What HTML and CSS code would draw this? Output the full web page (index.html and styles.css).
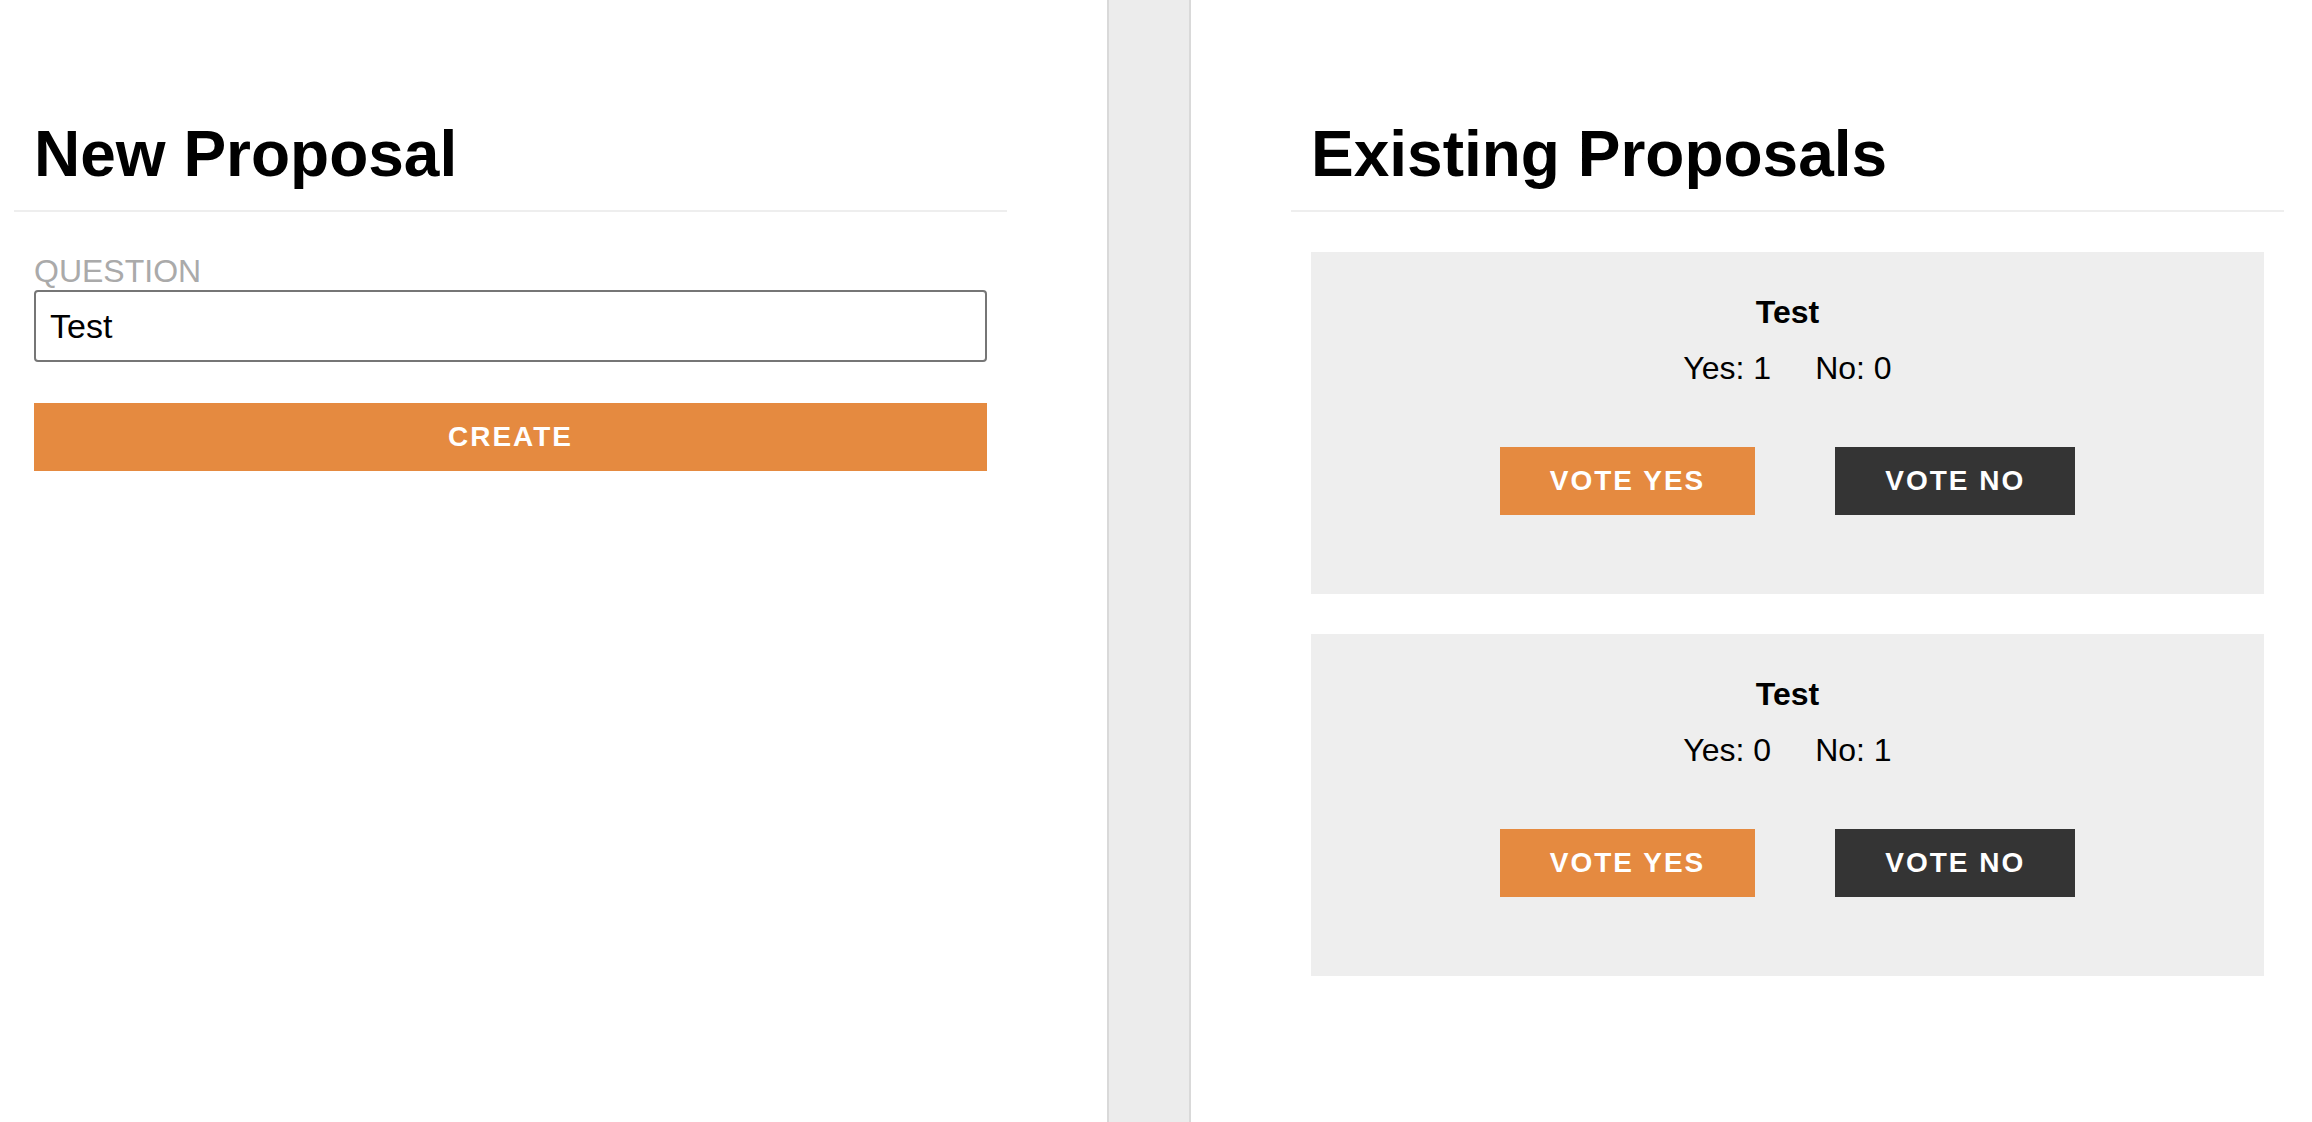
FILE: index.html
```html
<!DOCTYPE html>
<html lang="en">
<head>
<meta charset="utf-8">
<title>Proposals</title>
<link rel="stylesheet" href="styles.css">
</head>
<body>
<div class="app">
  <section class="pane pane-left">
    <h1 class="pane-title">New Proposal</h1>
    <div class="form">
      <label class="field-label" for="question">QUESTION</label>
      <input class="field-input" id="question" type="text" value="Test">
      <button class="btn btn-orange btn-block">CREATE</button>
    </div>
  </section>
  <div class="divider"></div>
  <section class="pane pane-right">
    <h1 class="pane-title">Existing Proposals</h1>
    <div class="proposals">
      <article class="card">
        <h3 class="card-title">Test</h3>
        <div class="counts"><span>Yes: 1</span><span>No: 0</span></div>
        <div class="actions">
          <button class="btn btn-orange">VOTE YES</button>
          <button class="btn btn-dark">VOTE NO</button>
        </div>
      </article>
      <article class="card">
        <h3 class="card-title">Test</h3>
        <div class="counts"><span>Yes: 0</span><span>No: 1</span></div>
        <div class="actions">
          <button class="btn btn-orange">VOTE YES</button>
          <button class="btn btn-dark">VOTE NO</button>
        </div>
      </article>
    </div>
  </section>
</div>
</body>
</html>
```
FILE: styles.css
```css
html, body {
  margin: 0;
  padding: 0;
  background: #fff;
  font-family: "Liberation Sans", Arial, Helvetica, sans-serif;
  color: #000;
}

.app {
  display: flex;
  min-height: 1122px;
}

.pane {
  box-sizing: border-box;
  padding-top: 117px;
}

.pane-left {
  width: 1107px;
  flex: none;
  padding-left: 14px;
  padding-right: 100px;
}

.pane-right {
  flex: 1;
  padding-left: 100px;
  padding-right: 28px;
}

.divider {
  flex: none;
  width: 84px;
  box-sizing: border-box;
  background: #ececec;
  border-left: 2px solid #d9d9d9;
  border-right: 2px solid #d9d9d9;
}

.pane-title {
  margin: 0;
  padding: 0 20px 19px;
  font-size: 64px;
  line-height: 74px;
  font-weight: bold;
  border-bottom: 2px solid #eeeeee;
}

.form {
  padding: 41px 20px 0;
}

.field-label {
  display: block;
  font-size: 32px;
  line-height: 36px;
  color: #aaaaaa;
}

.field-input {
  display: block;
  box-sizing: border-box;
  width: 100%;
  height: 72px;
  margin: 1px 0 0;
  padding: 0 14px;
  border: 2px solid #767676;
  border-radius: 4px;
  font-family: "Liberation Sans", Arial, sans-serif;
  font-size: 34px;
  color: #000;
  background: #fff;
  outline: none;
}

.btn {
  display: inline-block;
  height: 68px;
  padding: 0 50px;
  border: none;
  border-radius: 0;
  font-family: "Liberation Sans", Arial, sans-serif;
  font-size: 28px;
  font-weight: bold;
  letter-spacing: 2px;
  line-height: 68px;
  color: #fff;
  cursor: pointer;
}

.btn-block {
  display: block;
  width: 100%;
  margin-top: 41px;
}

.btn-orange {
  background: #e58a40;
}

.btn-dark {
  background: #343434;
}

.proposals {
  padding: 40px 20px 0;
}

.card {
  background: #eeeeee;
  padding: 42px 0 79px;
  margin-bottom: 40px;
  text-align: center;
}

.card-title {
  margin: 0;
  font-size: 32px;
  line-height: 36px;
  font-weight: bold;
}

.counts {
  margin-top: 20px;
  display: flex;
  justify-content: center;
  gap: 44px;
  font-size: 32px;
  line-height: 36px;
}

.actions {
  margin-top: 61px;
  display: flex;
  justify-content: center;
  gap: 80px;
}
```
